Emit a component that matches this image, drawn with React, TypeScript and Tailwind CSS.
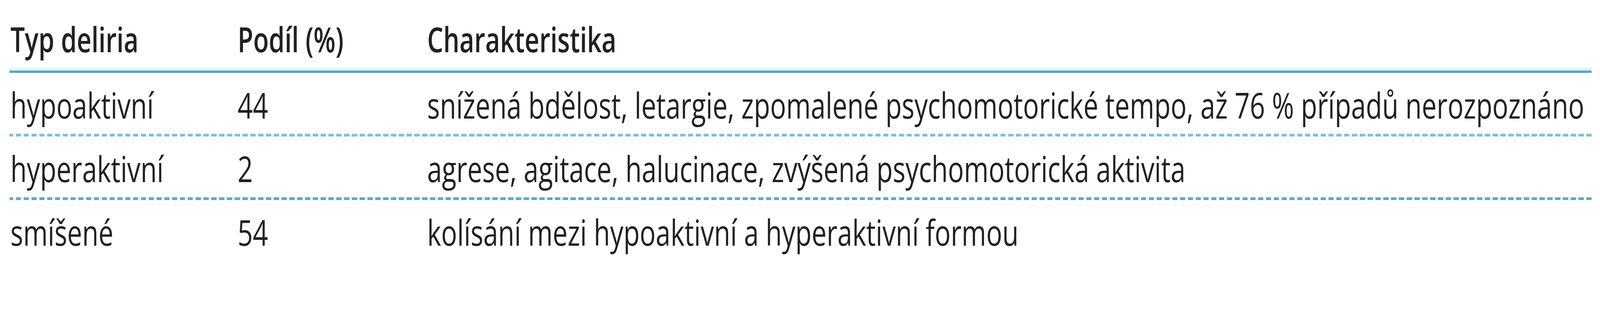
import { useEffect, useState } from "react";

const rows = [
  {
    type: "hypoaktivní",
    share: "44",
    text: "snížená bdělost, letargie, zpomalené psychomotorické tempo, až 76 % případů nerozpoznáno",
    line: "bg-[repeating-linear-gradient(90deg,#7cc0d6_0_18px,transparent_18px_27px)]",
  },
  {
    type: "hyperaktivní",
    share: "2",
    text: "agrese, agitace, halucinace, zvýšená psychomotorická aktivita",
    line: "bg-[repeating-linear-gradient(90deg,#5ea9bf_0_18px,transparent_18px_27px)]",
  },
  {
    type: "smíšené",
    share: "54",
    text: "kolísání mezi hypoaktivní a hyperaktivní formou",
    line: "",
  },
];

const DESIGN_WIDTH = 5529;

export default function App() {
  // the table is laid out for 5529px; squeeze it sideways if the window is narrower
  const [scale, setScale] = useState(1);
  useEffect(() => {
    const fit = () => setScale(Math.min(1, window.innerWidth / DESIGN_WIDTH));
    fit();
    window.addEventListener("resize", fit);
    return () => window.removeEventListener("resize", fit);
  }, []);

  return (
    <div className="w-screen h-[800px] overflow-hidden bg-white">
      <div
        className="w-[5529px] h-[800px] origin-top-left bg-white font-['Open_Sans',sans-serif] text-[#231f20]"
        style={{ transform: `scaleX(${scale})` }}
      >
        <div className="ml-[33px] w-[5467px] pt-[40px]">
          {/* Header */}
          <div className="grid grid-cols-[788px_655px_1fr] text-[88px] leading-[120px] font-semibold pb-[15px]">
            <div className="pl-[3px]">Typ deliria</div>
            <div>Podíl (%)</div>
            <div>Charakteristika</div>
          </div>
          <div className="h-[6px] bg-[#d3f7fc]" />
          <div className="h-[6px] bg-[#5ba6bf]" />

          {/* Rows */}
          {rows.map((r, i) => (
            <div key={i}>
              <div className="grid grid-cols-[788px_655px_1fr] text-[92px] leading-[120px] pt-[22px] pb-[14px]">
                <div className="pl-[3px]">{r.type}</div>
                <div>{r.share}</div>
                <div className="whitespace-nowrap">{r.text}</div>
              </div>
              {r.line && <div className={`h-[7px] ${r.line} bg-[position:-5px_0]`} />}
            </div>
          ))}
        </div>
      </div>
    </div>
  );
}
